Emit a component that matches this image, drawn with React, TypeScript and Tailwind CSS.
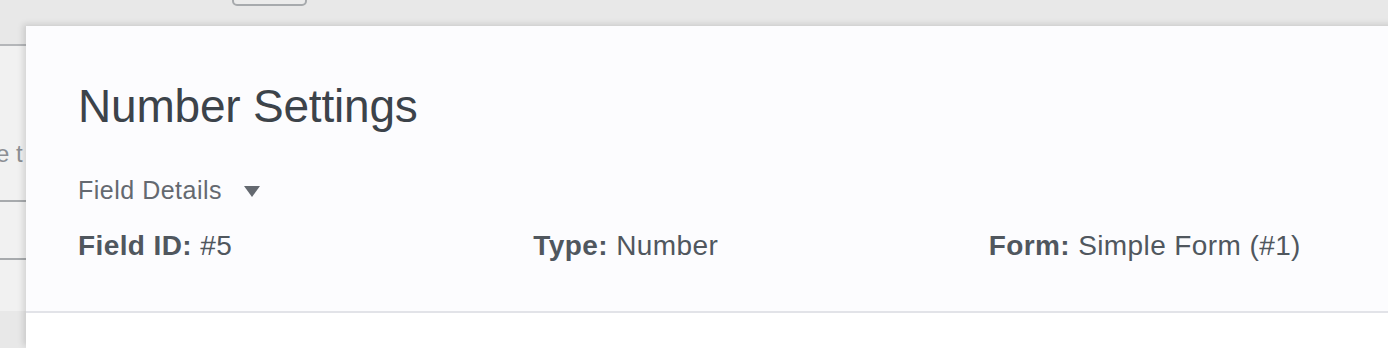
export default function App() {
  const details = [
    { label: 'Field ID:', value: '#5' },
    { label: 'Type:', value: 'Number' },
    { label: 'Form:', value: 'Simple Form (#1)' },
  ];

  return (
    <div
      className="relative flex h-[348px] w-[1388px] flex-col overflow-hidden bg-[#e8e8e8]"
      style={{ fontFamily: '"Liberation Sans", Arial, sans-serif' }}
    >
      {/* backdrop top strip with the underlying page's button peeking */}
      <div className="h-[26px] shrink-0 pl-[232px]">
        <div className="-mt-[10px] h-[16px] w-[75px] rounded-[5px] border-2 border-[#a7aaad] bg-[#ebebeb]" />
      </div>

      <div className="flex min-h-0 flex-1">
        {/* underlying page, left edge */}
        <div className="flex w-[26px] shrink-0 flex-col">
          <div className="h-[20px] shrink-0 border-b-2 border-[#b4b6b9]" />
          <div className="h-[156px] shrink-0 overflow-hidden border-b-2 border-[#a7aaad] bg-[#f1f1f1] pt-[94px]">
            <div className="-ml-[4px] whitespace-nowrap text-[24px] leading-[28px] text-[#8c8f94]">e t</div>
          </div>
          <div className="h-[58px] shrink-0 border-b-2 border-[#a7aaad] bg-[#f1f1f1]" />
          <div className="h-[51px] shrink-0 bg-[#f1f1f1]" />
        </div>

        {/* modal panel */}
        <div className="w-[1470px] shrink-0 bg-white shadow-[-3px_-2px_6px_rgba(0,0,0,0.12)]">
          <div className="border-b-2 border-[#e2e3e8] bg-[#fcfcfe] pb-[48px] pl-[52px] pr-[52px] pt-[53px]">
            <h1 className="text-[46px] font-normal leading-[55px] tracking-[-0.2px] text-[#3c434a]">Number Settings</h1>

            <div className="mt-[41px] flex items-center text-[25px] leading-[30px] tracking-[0.5px] text-[#646970]">
              <span>Field Details</span>
              <svg className="ml-[22px] mt-[3px]" width="16" height="11" viewBox="0 0 16 11">
                <path d="M0 0 L16 0 L8 11 Z" fill="#646970" />
              </svg>
            </div>

            <div className="mt-[24px] grid grid-cols-3 text-[28px] leading-[34px] tracking-[0.4px] text-[#50575e]">
              {details.map((d) => (
                <div key={d.label} className="whitespace-nowrap">
                  <span className="font-bold">{d.label}</span> <span>{d.value}</span>
                </div>
              ))}
            </div>
          </div>
        </div>
      </div>
    </div>
  );
}
